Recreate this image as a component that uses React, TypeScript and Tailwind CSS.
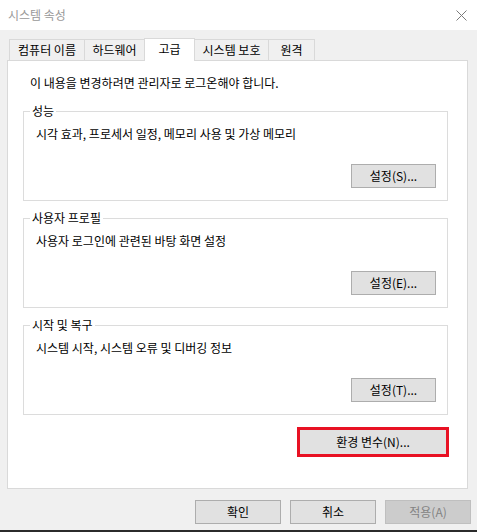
import React from "react";

const font = { fontFamily: '"Noto Sans CJK KR", "Noto Sans", sans-serif' };

function Btn({ label, w = "w-[85px]" }: { label: string; w?: string }) {
  return (
    <div
      className={`${w} h-[24px] bg-[#e1e1e1] border border-[#adadad] flex items-center justify-center text-[12px] leading-[16px] text-black`}
    >
      {label}
    </div>
  );
}

function Group({ title, desc, btn }: { title: string; desc: string; btn: string }) {
  return (
    <div className="relative h-[90px] ml-[15px] mr-[19px] border border-[#dcdcdc] flex flex-col">
      <div className="absolute left-[6px] top-[-9px] bg-white px-[2px] text-[12px] leading-[16px] text-black">
        {title}
      </div>
      <div className="pt-[14px] pl-[12px] text-[12px] leading-[16px] text-black">{desc}</div>
      <div className="mt-[22px] flex justify-end pr-[11px]">
        <Btn label={btn} />
      </div>
    </div>
  );
}

export default function App() {
  const tabs = [
    { label: "컴퓨터 이름", w: "w-[76px]" },
    { label: "하드웨어", w: "w-[61px]" },
    { label: "고급", w: "w-[51px]", active: true },
    { label: "시스템 보호", w: "w-[75px]" },
    { label: "원격", w: "w-[47px]" },
  ];
  return (
    <div className="w-[477px] h-[532px] bg-[#f0f0f0] flex flex-col overflow-hidden" style={font}>
      <div className="h-[30px] bg-white flex items-center justify-between pl-[8px] pr-[10px] shrink-0">
        <span className="text-[12px] leading-[16px] text-[#999999]">시스템 속성</span>
        <svg width="11" height="11" viewBox="0 0 11 11" className="mr-[0px]">
          <path d="M0.5 0.5 L10.5 10.5 M10.5 0.5 L0.5 10.5" stroke="#7a7a7a" strokeWidth="1" fill="none" />
        </svg>
      </div>
      <div className="flex flex-col px-[7px] pt-[8px] shrink-0">
        <div className="h-[22px] flex items-end pl-[2px]">
          {tabs.map((t, i) =>
            t.active ? (
              <div
                key={i}
                className={`${t.w} h-[23px] -mb-px -ml-px relative z-10 bg-white border-t border-l border-r border-[#d9d9d9] flex items-start justify-center pt-[2px] text-[12px] leading-[16px] text-black`}
              >
                {t.label}
              </div>
            ) : (
              <div
                key={i}
                className={`${t.w} h-[21px] ${i === 0 ? "" : "-ml-px"} bg-[#f0f0f0] border-t border-l border-r border-[#d9d9d9] flex items-center justify-center text-[12px] leading-[16px] text-black`}
              >
                {t.label}
              </div>
            )
          )}
        </div>
        <div className="h-[429px] w-[461px] bg-white border border-[#d9d9d9] flex flex-col">
          <div className="pt-[14px] pl-[22px] text-[12px] leading-[16px] text-black">
            이 내용을 변경하려면 관리자로 로그온해야 합니다.
          </div>
          <div className="mt-[20px] flex flex-col gap-[17px]">
            <Group title="성능" desc="시각 효과, 프로세서 일정, 메모리 사용 및 가상 메모리" btn="설정(S)..." />
            <Group title="사용자 프로필" desc="사용자 로그인에 관련된 바탕 화면 설정" btn="설정(E)..." />
            <Group title="시작 및 복구" desc="시스템 시작, 시스템 오류 및 디버깅 정보" btn="설정(T)..." />
          </div>
          <div className="mt-[12px] flex justify-end pr-[18px]">
            <div className="w-[152px] h-[30px] border-[3px] border-[#e81123] bg-[#e1e1e1] flex items-center justify-center text-[12px] leading-[16px] text-black">
              환경 변수(N)...
            </div>
          </div>
        </div>
      </div>
      <div className="mt-[11px] flex justify-end gap-[9px] pr-[6px] shrink-0">
        <Btn label="확인" w="w-[86px]" />
        <Btn label="취소" w="w-[86px]" />
        <div className="w-[86px] h-[24px] bg-[#cccccc] border border-[#bfbfbf] flex items-center justify-center text-[12px] leading-[16px] text-[#838383]">
          적용(A)
        </div>
      </div>
      <div className="flex-1" />
      <div className="h-[2px] bg-[#2b2b2b] shrink-0" />
    </div>
  );
}
